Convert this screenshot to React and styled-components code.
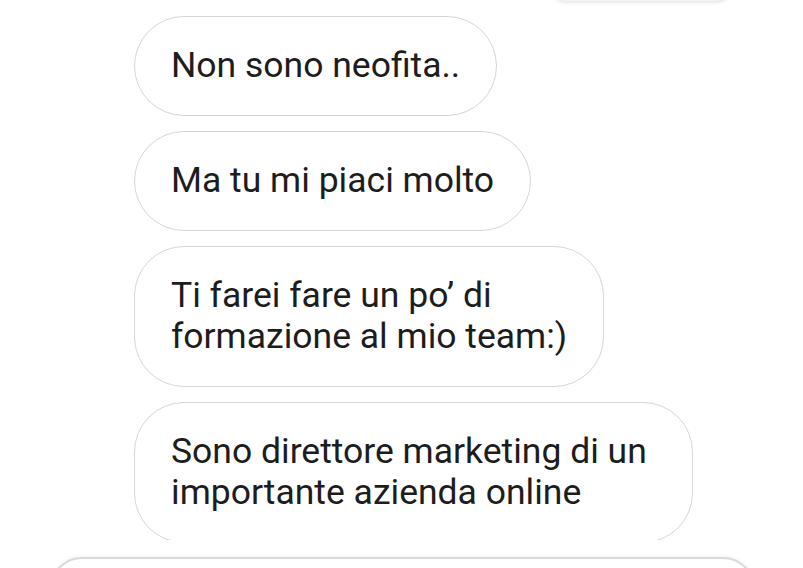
import styled, { createGlobalStyle } from "styled-components";

const GlobalStyle = createGlobalStyle`
  html, body {
    margin: 0;
    padding: 0;
    background: #fff;
  }
  body {
    font-family: Roboto, "Noto Sans", "Liberation Sans", sans-serif;
    overflow: hidden;
  }
`;

const messages = [
  { text: "Non sono neofita.." },
  { text: "Ma tu mi piaci molto" },
  { text: "Ti farei fare un po\u2019 di\nformazione al mio team:)" },
  { text: "Sono direttore marketing di un\nimportante azienda online", full: true },
];

const App = () => {
  return (
    <>
      <GlobalStyle />
      <Screen>
        <Thread>
          <PeerBubble />
          {messages.map((msg, i) => (
            <Bubble key={i} $full={msg.full}>
              {msg.text.split("\n").map((line, j) => (
                <Line key={j}>{line}</Line>
              ))}
            </Bubble>
          ))}
        </Thread>
        <Footer>
          <Composer />
        </Footer>
      </Screen>
    </>
  );
};

export default App;

const Screen = styled.div`
  width: 803px;
  height: 568px;
  display: flex;
  flex-direction: column;
  overflow: hidden;
  background: #fff;
`;

const Thread = styled.div`
  height: 540px;
  flex-shrink: 0;
  overflow: hidden;
  display: flex;
  flex-direction: column;
  align-items: flex-start;
  gap: 15px;
  padding-left: 134px;
`;

const PeerBubble = styled.div`
  align-self: flex-end;
  margin-right: 73px;
  margin-top: -98px;
  width: 178px;
  height: 99px;
  flex-shrink: 0;
  border-radius: 0 0 14px 14px;
  background: #f4f4f4;
  box-shadow: 0 1px 4px rgba(0, 0, 0, 0.14);
`;

const Bubble = styled.div`
  flex-shrink: 0;
  box-sizing: border-box;
  width: ${(p) => (p.$full ? "559px" : "auto")};
  padding: 28px 36px 29px;
  border: 1.5px solid #d6d6d6;
  border-radius: 50px;
  background: #fff;
  color: #1d1d1d;
  font-size: 35.5px;
  line-height: 41px;
`;

const Line = styled.div`
  white-space: nowrap;
`;

const Footer = styled.div`
  flex: 1;
  background: #fff;
  padding: 17px 48px 0 50px;
`;

const Composer = styled.div`
  height: 60px;
  border: 2px solid #dadada;
  border-radius: 40px;
  box-shadow: 0 -1px 3px rgba(0, 0, 0, 0.05);
`;
